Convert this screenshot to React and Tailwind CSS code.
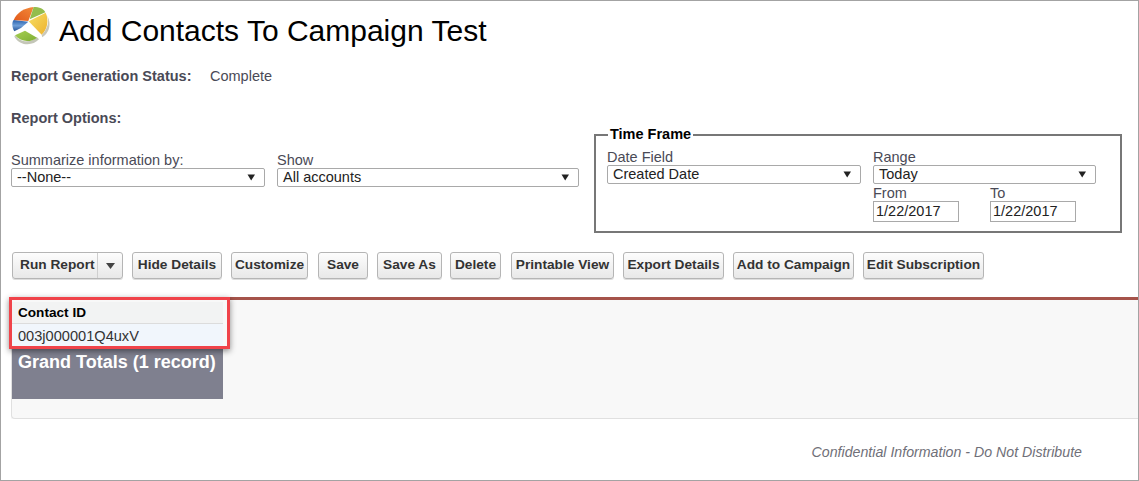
const buttons = [
  { label: 'Hide Details', cls: 'w-[90px]' },
  { label: 'Customize', cls: 'ml-[9px] w-[77px]' },
  { label: 'Save', cls: 'ml-[10px] w-[50px]' },
  { label: 'Save As', cls: 'ml-[9px] w-[65px]' },
  { label: 'Delete', cls: 'ml-[8px] w-[51px]' },
  { label: 'Printable View', cls: 'ml-[10px] w-[103px]' },
  { label: 'Export Details', cls: 'ml-[9px] w-[101px]' },
  { label: 'Add to Campaign', cls: 'ml-[9px] w-[121px]' },
  { label: 'Edit Subscription', cls: 'ml-[9px] w-[121px]' },
];

function Logo() {
  return (
    <svg width="40" height="40" viewBox="0 0 120 120" className="-mt-[4px] shrink-0 self-start">
      <defs>
        <linearGradient id="orange" x1="0" y1="1" x2="1" y2="0">
          <stop offset="0" stopColor="#e2591b" />
          <stop offset="1" stopColor="#f28a3a" />
        </linearGradient>
        <linearGradient id="yellow" x1="0" y1="0" x2="1" y2="1">
          <stop offset="0" stopColor="#f6df66" />
          <stop offset="1" stopColor="#eeb22e" />
        </linearGradient>
        <linearGradient id="blue" x1="0" y1="0" x2="0" y2="1">
          <stop offset="0" stopColor="#2a62ad" />
          <stop offset="0.5" stopColor="#6f9fd8" />
          <stop offset="1" stopColor="#1f4f94" />
        </linearGradient>
        <linearGradient id="green" x1="0" y1="0" x2="1" y2="1">
          <stop offset="0" stopColor="#a6cf52" />
          <stop offset="1" stopColor="#7fae35" />
        </linearGradient>
      </defs>
      <path d="M10 92 C28 122 66 120 84 100 L78 94 C60 110 30 112 12 88 Z" fill="#c4c6b8" />
      <path d="M12 88 L42 74 L78 95 C60 109 30 110 12 88 Z" fill="url(#green)" />
      <path d="M4 56 C4 50 5 46 8 42 L52 47 L30 66 L10 76 C6 70 4 62 4 56 Z" fill="url(#blue)" />
      <path d="M8 42 C17 20 40 6 68 3 L52 45 Z" fill="url(#orange)" />
      <path d="M68 3 C85 3 98 8 103 19 L56 40 Z" fill="#93bd4d" />
      <path d="M53 46 L104 20 C114 40 110 70 92 86 Z" fill="url(#yellow)" />
      <path d="M92 87 C110 70 116 45 108 28 C122 52 116 80 94 94 Z" fill="#c9c8bb" />
    </svg>
  );
}

function Select({ value, className }) {
  return (
    <div className={`flex h-[19px] items-center justify-between rounded-[2px] border border-[#a9a9a9] bg-white pl-[5px] pr-[6px] text-[14.5px] text-[#222] ${className}`}>
      <span>{value}</span>
      <svg width="9" height="7" viewBox="0 0 9 7" className="mr-[2px]">
        <path d="M0.5 0.5 H8 L4.2 6.5 Z" fill="#222" />
      </svg>
    </div>
  );
}

function DateInput({ value }) {
  return (
    <div className="flex h-[21px] w-[86px] items-center border border-[#a9a9a9] bg-white pl-[2px] text-[14.5px] text-[#222]">
      {value}
    </div>
  );
}

const btnClass =
  'flex h-[27px] items-center justify-center whitespace-nowrap rounded-[3px] border border-[#b5b5b5] bg-gradient-to-b from-[#fdfdfd] to-[#e8e8e8] text-[13.7px] font-bold text-[#333] shadow-[0_1px_0_#ddd]';

export default function App() {
  return (
    <div className="relative flex h-[481px] w-[1139px] flex-col overflow-hidden border border-[#a3a3a3] bg-white font-['Liberation_Sans',Arial,sans-serif] text-[#4a4a56]">
      {/* Header */}
      <div className="mt-[9px] flex h-[42px] items-center pl-[10px]">
        <Logo />
        <h1 className="ml-[8px] text-[30px] leading-none text-black">Add Contacts To Campaign Test</h1>
      </div>

      <div className="mt-[15px] flex h-[20px] items-center pl-[10px] text-[14.5px]">
        <span className="w-[199px] font-bold">Report Generation Status:</span>
        <span>Complete</span>
      </div>
      <div className="mt-[22px] flex h-[20px] items-center pl-[10px] text-[14.5px] font-bold">Report Options:</div>

      {/* Options */}
      <div className="flex h-[123px] pl-[10px]">
        <div className="mt-[23px] w-[266px]">
          <div className="h-[16px] text-[14.5px] leading-[16px]">Summarize information by:</div>
          <Select value="--None--" className="w-[254px]" />
        </div>
        <div className="mt-[23px] w-[317px]">
          <div className="h-[16px] text-[14.5px] leading-[16px]">Show</div>
          <Select value="All accounts" className="w-[302px] border-[#777]" />
        </div>
        <div className="relative mt-[5px] h-[99px] w-[528px] border-2 border-[#777] pl-[11px]">
          <span className="absolute top-[-10px] left-[12px] bg-white px-[2px] text-[14.5px] font-bold leading-[17px] text-black">Time Frame</span>
          <div className="mt-[13px] flex">
            <div className="w-[266px]">
              <div className="h-[16px] text-[14.5px] leading-[16px]">Date Field</div>
              <Select value="Created Date" className="w-[254px]" />
            </div>
            <div>
              <div className="h-[16px] text-[14.5px] leading-[16px]">Range</div>
              <Select value="Today" className="w-[223px]" />
              <div className="mt-[1px] flex">
                <div className="w-[117px]">
                  <div className="h-[16px] text-[14.5px] leading-[16px]">From</div>
                  <DateInput value="1/22/2017" />
                </div>
                <div>
                  <div className="h-[16px] text-[14.5px] leading-[16px]">To</div>
                  <DateInput value="1/22/2017" />
                </div>
              </div>
            </div>
          </div>
        </div>
      </div>

      {/* Buttons */}
      <div className="flex h-[27px] pl-[11px]">
        <div className={`${btnClass} mr-[9px] w-[111px]`}>
          <span className="flex h-full w-[85px] items-center border-r border-[#cfcfcf] pl-[7px]">Run Report</span>
          <span className="flex flex-1 items-center justify-center">
            <svg width="9" height="6" viewBox="0 0 9 6"><path d="M0 0 H9 L4.5 6 Z" fill="#444" /></svg>
          </span>
        </div>
        {buttons.map((b) => (
          <div key={b.label} className={`${btnClass} ${b.cls}`}>{b.label}</div>
        ))}
      </div>

      {/* Report table */}
      <div className="ml-[10px] mt-[18px] h-[122px] border-t-[3px] border-[#a5534a] bg-[#f8f8f8]">
        <div className="relative h-[119px] rounded-bl-[4px] border-b border-l border-[#e0e0e0]">
          <div className="w-[211px] pt-[2px]">
            <div className="flex h-[22px] items-center border-b border-[#dcdcdc] bg-[#f2f3f3] pl-[6px] pt-[2px] text-[13.6px] font-bold text-black">Contact ID</div>
            <div className="flex h-[24px] items-center bg-[#f1f6fc] pl-[6px] pt-[2px] text-[14.6px] text-[#333]">003j000001Q4uxV</div>
            <div className="h-[51px] bg-[#7f808f] pl-[6px] pt-[3px] text-[18px] font-bold leading-[22px] text-white">Grand Totals (1 record)</div>
          </div>
          <div className="absolute left-[-3px] top-[-3px] h-[52px] w-[221px] border-[3px] border-[#f0434a] shadow-[0_2px_6px_rgba(0,0,0,0.45)]" />
        </div>
      </div>

      <div className="mt-[25px] pr-[56px] text-right text-[14.2px] italic leading-[17px] text-[#6f6f78]">
        Confidential Information - Do Not Distribute
      </div>
    </div>
  );
}
